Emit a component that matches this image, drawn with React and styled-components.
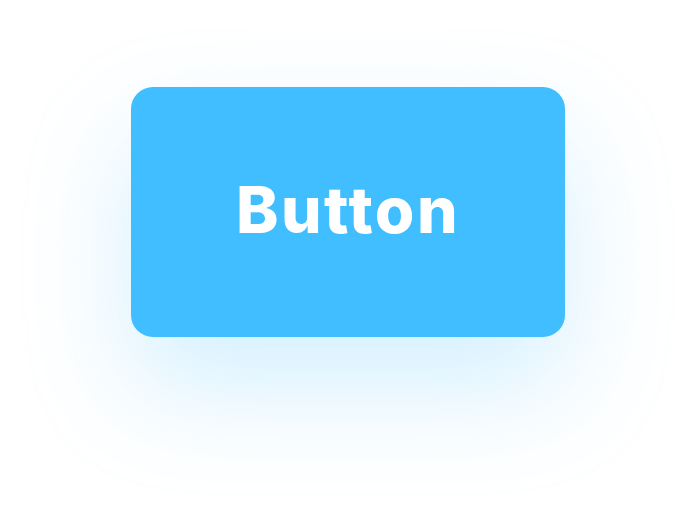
import React from "react";
import styled, { createGlobalStyle } from "styled-components";

const GlobalStyle = createGlobalStyle`
  html, body {
    margin: 0;
    padding: 0;
    background: #ffffff;
  }
`;

const Page = styled.div`
  width: 696px;
  height: 512px;
  display: flex;
  justify-content: center;
  align-items: flex-start;
  padding-top: 87px;
  box-sizing: border-box;
`;

const Button = styled.button`
  width: 434px;
  height: 250px;
  border: none;
  border-radius: 22px;
  background: #40beff;
  color: #ffffff;
  font-family: Inter, "Noto Sans", sans-serif;
  font-weight: 800;
  font-size: 64px;
  letter-spacing: 2.5px;
  display: flex;
  align-items: center;
  justify-content: center;
  padding: 0 0 6px;
  box-shadow: 0 50px 110px rgba(64, 190, 255, 0.23);
  cursor: pointer;
`;

export default function App() {
  return (
    <>
      <GlobalStyle />
      <Page>
        <Button>Button</Button>
      </Page>
    </>
  );
}
